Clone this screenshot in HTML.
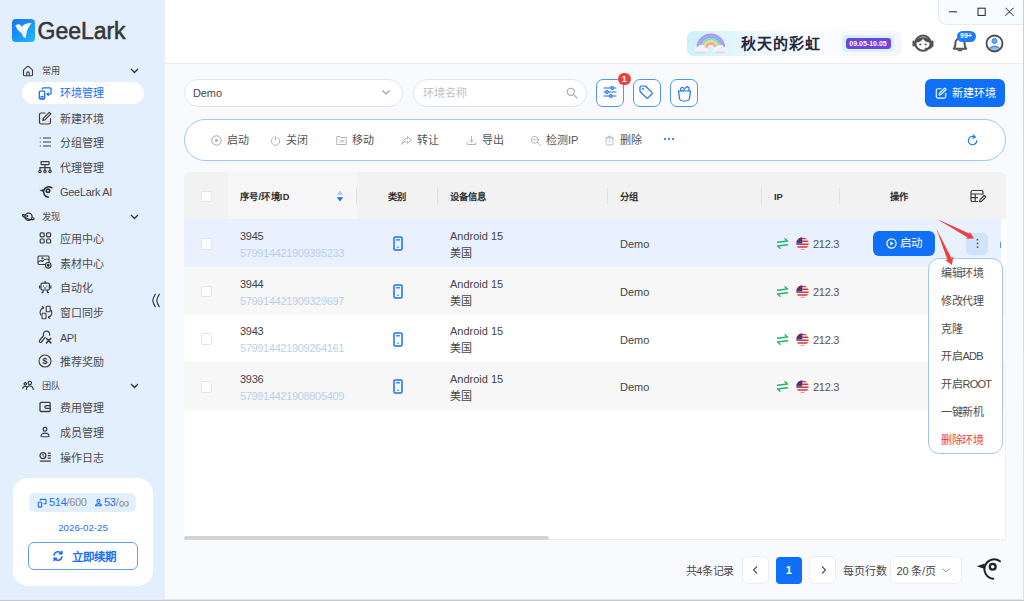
<!DOCTYPE html>
<html lang="zh-CN">
<head>
<meta charset="utf-8">
<title>GeeLark</title>
<style>
*{box-sizing:border-box;margin:0;padding:0}
html,body{width:1024px;height:601px;overflow:hidden}
body{font-family:"Liberation Sans",sans-serif;font-size:11px;color:#333;background:#f8fafe;position:relative}
.abs{position:absolute}
svg{display:block;overflow:visible}
/* sidebar */
#side{position:absolute;left:0;top:0;width:165px;height:599px;background:#e4effd}
#logo-ic{position:absolute;left:12px;top:18.5px;width:23px;height:23px;border-radius:4px;background:linear-gradient(135deg,#1478f8 10%,#22b6fc 95%)}
#logo-tx{position:absolute;left:37.6px;top:15.7px;font-size:23px;font-weight:normal;letter-spacing:-.05px;color:#363638;line-height:30px;-webkit-text-stroke:.55px #363638}
.grp{position:absolute;left:0;width:165px;height:16px;font-size:9.2px;color:#4a4a4a;line-height:16px}
.grp span{position:absolute;left:42px;top:0}
.grp svg.gi{position:absolute;left:22px;top:2px}
.grp svg.ch{position:absolute;left:130px;top:5px}
.it{position:absolute;left:22px;width:122px;height:22px;line-height:22px;font-size:11px;color:#4a4a4a;border-radius:11px}
.it span{position:absolute;left:38px;top:0;white-space:nowrap}
.it svg{position:absolute;left:15.5px;top:2.9px}
.it.on svg{top:4px}
.it.on{background:#fff;color:#1a6ff5}
#card{position:absolute;left:13px;top:478px;width:140px;height:108px;background:#fff;border-radius:15px}
#stat{position:absolute;left:16px;top:15px;width:107px;height:19px;border-radius:6px;background:#e4effd;font-size:11px;line-height:19px;color:#1a6ff5;white-space:nowrap}
#stat i{font-style:normal;color:#8a8f99}
#date{position:absolute;left:0;top:43px;width:140px;text-align:center;font-size:9.7px;color:#1a6ff5;line-height:14px}
#renew{position:absolute;left:15px;top:64px;width:110px;height:28px;border:1px solid #5a9df8;border-radius:6px;color:#1a6ff5;font-weight:bold;font-size:11.5px;line-height:26px}
#renew span{position:absolute;left:42.5px;top:1.2px;white-space:nowrap}
/* header */
#head{position:absolute;left:165px;top:0;width:859px;height:64px;background:#fff;border-bottom:1px solid #ececee}
#winc{position:absolute;left:938px;top:0;width:86px;height:25px;background:#f8fbff;border-left:1px solid #e6ebf3;border-bottom:1px solid #e6ebf3;border-bottom-left-radius:9px}
#banner{position:absolute;left:687px;top:31px;width:215px;height:25px;border-radius:7px;background:linear-gradient(90deg,#cdeffc 0%,#e6f7fe 25%,#fafdff 50%,#f8f9fe 80%,#f5f6fe 100%)}
#btx{position:absolute;left:740.5px;top:32px;font-size:15px;font-weight:bold;letter-spacing:1.2px;color:#26263a;line-height:23px;white-space:nowrap}
#dwrap{position:absolute;left:842px;top:35px;width:52px;height:17px;border-radius:4px;background:#d6f4fd}
#dpill{position:absolute;left:845.5px;top:38px;width:45px;height:11px;border-radius:3px;background:#6f45e0;color:#fff;font-size:7px;font-weight:bold;line-height:11px;text-align:center;white-space:nowrap}
#b99{position:absolute;left:956.5px;top:31px;width:19px;height:10.5px;border-radius:6px;background:#1f7cf6;color:#fff;font-size:7px;line-height:10.5px;text-align:center;font-weight:bold}
/* toolbar */
.pill{position:absolute;height:27.6px;border:1px solid #e3e6ec;border-radius:14px;background:#fff;font-size:11px;line-height:27px}
.ib{position:absolute;top:79px;width:28.3px;height:27.8px;border:1px solid #4d95f7;border-radius:7px;background:#fff}
#newb{position:absolute;left:925px;top:79px;width:80px;height:28px;border-radius:6px;background:#0f6ff6;color:#fff;font-size:11px;line-height:28px}
#acts{position:absolute;left:184px;top:119px;width:822px;height:41.5px;border:1px solid #a3c8f8;border-radius:21px;background:#fff}
.ac{position:absolute;top:.8px;height:39px;line-height:39px;font-size:11px;color:#555;white-space:nowrap}
.ac svg{position:absolute;top:14px;left:-16px}
/* table */
#tbl{position:absolute;left:184px;top:172px;width:822px;height:368px;background:#fff;border-radius:6px 6px 0 0;overflow:hidden}
#th{position:absolute;left:0;top:0;width:822px;height:47px;background:#f2f2f3}
#th .sorted{position:absolute;left:44px;top:0;width:129px;height:47px;background:#f6f6f7}
.h{position:absolute;top:.6px;height:47px;line-height:48px;font-size:9.3px;font-weight:bold;color:#303030;white-space:nowrap}
.sep{position:absolute;top:16px;width:1px;height:16px;background:#dfe1e5}
.row{position:absolute;left:0;width:822px;height:47.8px}
.cb{position:absolute;left:16.7px;margin-top:.8px;width:11.5px;height:11.5px;border:1px solid #e4e6ea;border-radius:2px;background:#fff}
.no{position:absolute;left:56px;top:9.6px;font-size:11px;line-height:14px;color:#454545;letter-spacing:-.3px}
.id{position:absolute;left:56px;top:26.8px;font-size:11px;line-height:14px;color:#bccfe8;letter-spacing:-.34px}
.ph{position:absolute;left:209px;top:17px}
.dv{position:absolute;left:266px;top:9.6px;font-size:11px;line-height:14px;color:#454545}
.cn{position:absolute;left:266px;top:26.6px;font-size:11px;line-height:15px;color:#454545}
.gp{position:absolute;left:436px;top:18px;font-size:11px;line-height:14px;color:#454545}
.ex{position:absolute;left:592px;top:19px}
.fl{position:absolute;left:612px;top:18px}
.ip{position:absolute;left:629px;top:18px;font-size:11px;line-height:14px;color:#555;letter-spacing:-.3px}
/* menu */
#menu{position:absolute;left:928px;top:258px;width:75px;height:196px;border:1px solid #a3c8f8;border-radius:11px;background:#fff}
#menu div{position:absolute;left:12px;font-size:11px;line-height:16px;color:#4c4c4c;white-space:nowrap;letter-spacing:-.3px}
/* pager */
.pb{position:absolute;top:556px;width:27px;height:28px;border:1px solid #eceef3;border-radius:6px;background:#fff}
</style>
</head>
<body>
<div id="side">
  <div id="logo-ic"><svg width="23" height="23" viewBox="0 0 23 23"><path d="M3.100 6.300L6.600 5.200C8 5 9 6.500 9.800 8.200 11 5.500 14 4.200 19.800 4 17.500 6 16.500 9 14.800 12.100L13.600 19.200 11 17.600C10.500 15 9.500 13.800 7.900 12.800 6 11.500 4.800 9.800 4.200 7.800z" fill="#fff"/><path d="M9.800 8.200L14.800 12.100 13.600 19.200 11 17.600C10.500 15 9.500 13.800 7.900 12.800z" fill="#dff0ff" opacity=".7"/></svg></div>
  <div id="logo-tx">GeeLark</div>

  <div class="grp" style="top:63px"><svg class="gi" width="12" height="12" viewBox="0 0 12 12" fill="none" stroke="#3a3a3a" stroke-width="1.100" stroke-linejoin="round"><path d="M1.500 5.600Q1.500 4.800 2.100 4.300L5.200 1.700Q6 1.100 6.800 1.700L9.900 4.300Q10.500 4.800 10.500 5.600V9.800a1 1 0 0 1-1 1h-7a1 1 0 0 1-1-1z"/><path d="M4.700 10.800V8.200a1.300 1.300 0 0 1 2.600 0v2.600"/></svg><span>常用</span><svg class="ch" width="9" height="6" viewBox="0 0 9 6" fill="none" stroke="#333" stroke-width="1.300"><path d="M1 1l3.500 3.500L8 1"/></svg></div>
  <div class="it on" style="top:82px"><svg width="14" height="14" viewBox="0 0 14 14" fill="none" stroke="#1a6ff5" stroke-width="1.300" stroke-linejoin="round" stroke-linecap="round"><rect x="1.300" y="5.200" width="5.400" height="7.800" rx=".9"/><path d="M3 12.800v-2.300h2v2.300" stroke-width="1.100"/><path d="M4.300 3V2.800a1 1 0 0 1 1-1h6.700a1 1 0 0 1 1 1v4.400a1 1 0 0 1-1 1H9.200"/><path d="M10.400 6.900L9 8.200l1.400 1.300" stroke-width="1.100"/></svg><span>环境管理</span></div>
  <div class="it" style="top:107.7px"><svg width="14" height="14" viewBox="0 0 14 14" fill="none" stroke="#3a3a3a" stroke-width="1.200" stroke-linejoin="round" stroke-linecap="round"><path d="M7 2H3.300A1.800 1.800 0 0 0 1.500 3.800v7.400A1.800 1.800 0 0 0 3.300 13h7.400a1.800 1.800 0 0 0 1.800-1.800V7.500"/><path d="M11.300 1.300l1.600 1.600-6 6-2.100.5.500-2.100z"/></svg><span>新建环境</span></div>
  <div class="it" style="top:131.7px"><svg width="14" height="14" viewBox="0 0 14 14" fill="none" stroke="#3a3a3a" stroke-width="1.200"><path d="M5 3h8M5 7h8M5 11h8"/><path d="M1.800 3h1M1.800 7h1M1.800 11h1" stroke-width="1.100"/></svg><span>分组管理</span></div>
  <div class="it" style="top:156.7px"><svg width="14" height="14" viewBox="0 0 14 14" fill="none" stroke="#3a3a3a" stroke-width="1.200"><rect x="3" y="1.600" width="8" height="3" rx=".6"/><path d="M7 4.600v3M2 10.200V7.600h10v2.600M7 7.600v2.600"/><circle cx="2" cy="11.500" r="1.200"/><circle cx="7" cy="11.500" r="1.200"/><circle cx="12" cy="11.500" r="1.200"/></svg><span>代理管理</span></div>
  <div class="it" style="top:181px"><svg style="left:17px;top:5.400px" width="14" height="11.900" viewBox="0 0 26 22" fill="none" stroke="#2e2e2e" stroke-linecap="round"><path d="M.6 8.300L8.800 5.600Q8 8.300 8.800 11z" fill="#2e2e2e" stroke="none"/><path d="M24 3.300A9.700 9.700 0 1 0 17.300 20.700" stroke-width="2.800"/><circle cx="16.700" cy="8.700" r="3.200" stroke-width="3" /></svg><span style="letter-spacing:-.3px">GeeLark AI</span></div>
  <div class="grp" style="top:209px"><svg class="gi" width="13" height="12" viewBox="0 0 13 12" fill="none" stroke="#2b2b2b" stroke-width="1.200"><circle cx="6.500" cy="5.800" r="3.600"/><path d="M3.200 4.300C1.600 3.600.6 3.500.5 4c-.2.900 2.200 2.600 5.400 3.700s6 1.300 6.300.4c.1-.4-.5-1.100-1.600-1.900"/><circle cx="5.300" cy="5" r=".5" fill="#2b2b2b"/></svg><span>发现</span><svg class="ch" width="9" height="6" viewBox="0 0 9 6" fill="none" stroke="#333" stroke-width="1.300"><path d="M1 1l3.500 3.500L8 1"/></svg></div>
  <div class="it" style="top:227.7px"><svg width="14" height="14" viewBox="0 0 14 14" fill="none" stroke="#3a3a3a" stroke-width="1.200"><rect x="2.200" y="1.800" width="4" height="4" rx="1"/><rect x="8.600" y="1.800" width="4" height="4" rx="1"/><rect x="2.200" y="8" width="4" height="4" rx="1"/><rect x="8.600" y="8" width="4" height="4" rx="1"/></svg><span>应用中心</span></div>
  <div class="it" style="top:252.7px"><svg style="top:1px;left:14.500px" width="15" height="15" viewBox="0 0 15 15" fill="none" stroke="#3a3a3a" stroke-width="1.100" stroke-linejoin="round"><path d="M8 10.500H2a1 1 0 0 1-1-1V3a1 1 0 0 1 1-1h9a1 1 0 0 1 1 1v5"/><path d="M1 8.500c1.500-2 3-2.500 4.500-1 1.200-1.800 3.500-3.300 6.500-1.800"/><circle cx="5.500" cy="4.300" r=".6" fill="#3a3a3a"/><circle cx="11.200" cy="11.300" r="2.800"/><circle cx="11.200" cy="11.300" r=".9" fill="#3a3a3a"/></svg><span>素材中心</span></div>
  <div class="it" style="top:276.7px"><svg width="14" height="14" viewBox="0 0 14 14" fill="none" stroke="#3a3a3a" stroke-width="1.200" stroke-linejoin="round"><rect x="3" y="3.200" width="8.400" height="6.800" rx="1.200"/><path d="M7.200 3.200V1M1.600 5.500v3M12.800 5.500v3M5 10v2.600H3.500M9.400 10v2.600h1.500"/><path d="M5.500 5.600v1M8.900 5.600v1M6 8h2.400" stroke-width="1"/></svg><span>自动化</span></div>
  <div class="it" style="top:301.7px"><svg width="16" height="15" viewBox="0 0 16 15" fill="none" stroke="#3a3a3a" stroke-width="1.100" stroke-linejoin="round" stroke-linecap="round"><rect x="8.200" y="1.200" width="4" height="5.600" rx=".7"/><rect x="4" y="8.200" width="4" height="5.600" rx=".7"/><path d="M5.500 2.500C2.800 3.500 1 6.800 2.800 10M10.500 12.500c2.700-1 4.500-4.300 2.700-7.500"/><path d="M4.200 1.600l1.500.9-1 1.400M11.800 13.400l-1.500-.9 1-1.400"/></svg><span>窗口同步</span></div>
  <div class="it" style="top:326.7px"><svg width="15" height="14" viewBox="0 0 15 14" fill="none" stroke="#3a3a3a" stroke-width="1.200" stroke-linecap="round" stroke-linejoin="round"><path d="M11.600 5.200A3.200 3.200 0 1 0 5.600 5.500L1.600 10.400a1.200 1.200 0 0 0 1.800 1.600l3.800-4.600"/><path d="M8.500 8.500l4.400 4.400M12.900 8.500l-4.400 4.400" stroke-width="1.500"/></svg><span style="letter-spacing:-.5px">API</span></div>
  <div class="it" style="top:350.7px"><svg width="14" height="14" viewBox="0 0 14 14" fill="none" stroke="#3a3a3a" stroke-width="1.100"><circle cx="7" cy="7" r="6"/><text x="7" y="10.400" font-family="Liberation Sans, sans-serif" font-size="9.500" font-weight="bold" text-anchor="middle" fill="#3a3a3a" stroke="none">$</text></svg><span>推荐奖励</span></div>
  <div class="grp" style="top:378.2px"><svg class="gi" width="13" height="11" viewBox="0 0 13 11" fill="none" stroke="#2b2b2b" stroke-width="1.100" stroke-linecap="round"><circle cx="7.800" cy="3" r="1.700"/><path d="M4.300 9.500c.3-2.300 1.700-3.500 3.500-3.500s3.200 1.200 3.500 3.500"/><circle cx="3.300" cy="3.800" r="1.200"/><path d="M.8 8.500C1 7 2 6.200 3.300 6.200c.6 0 1.100.2 1.500.5"/></svg><span>团队</span><svg class="ch" width="9" height="6" viewBox="0 0 9 6" fill="none" stroke="#333" stroke-width="1.300"><path d="M1 1l3.500 3.500L8 1"/></svg></div>
  <div class="it" style="top:396.7px"><svg width="14" height="14" viewBox="0 0 14 14" fill="none" stroke="#3a3a3a" stroke-width="1.300" stroke-linejoin="round"><rect x="2" y="2.300" width="10.200" height="9.200" rx="1"/><path d="M12.200 5.600H8.300a1.400 1.400 0 0 0 0 2.800h3.900"/></svg><span>费用管理</span></div>
  <div class="it" style="top:421.7px"><svg width="14" height="14" viewBox="0 0 14 14" fill="none" stroke="#3a3a3a" stroke-width="1.200"><circle cx="7" cy="4.300" r="1.900"/><path d="M3 11.200c0-1.800 1.800-3 4-3s4 1.200 4 3c0 .5-8 .5-8 0z" stroke-linejoin="round"/></svg><span>成员管理</span></div>
  <div class="it" style="top:446.7px"><svg width="14" height="14" viewBox="0 0 14 14" fill="none" stroke="#3a3a3a" stroke-width="1.200"><circle cx="5" cy="5.600" r="3"/><path d="M5 3.800v1.900l1.500 1" stroke-width="1"/><path d="M9.800 3.200h3M9.800 5.700h3M9.800 8.200h3M1.800 11.200h11"/></svg><span>操作日志</span></div>
  <svg class="abs" style="left:151px;top:293px" width="10" height="15" viewBox="0 0 10 15" fill="none" stroke="#333" stroke-width="1.200" stroke-linecap="round" stroke-linejoin="round"><path d="M4.300 1.200Q2.200 4.500 1.700 7.500 2.200 10.500 4.300 13.800M8.300 1.200Q6.200 4.500 5.700 7.500 6.200 10.500 8.300 13.800"/></svg>
  <div id="card">
    <div id="stat"><svg class="abs" style="left:8px;top:5px" width="10" height="10" viewBox="0 0 14 14" fill="none" stroke="#1a6ff5" stroke-width="1.600" stroke-linejoin="round"><rect x="1.800" y="6" width="4.700" height="6.800" rx=".8"/><path d="M4.500 3.800V3a1 1 0 0 1 1-1h6.200a1 1 0 0 1 1 1v4a1 1 0 0 1-1 1H9"/></svg><span class="abs" style="left:20px;top:0;letter-spacing:-.3px">514<i>/600</i></span><svg class="abs" style="left:65px;top:5px" width="9" height="9" viewBox="0 0 14 14" fill="none" stroke="#1a6ff5" stroke-width="1.800"><circle cx="7" cy="4.300" r="2.300"/><path d="M2.500 12c0-2 2-3.300 4.500-3.300s4.500 1.300 4.500 3.300z" stroke-linejoin="round"/></svg><span class="abs" style="left:75px;top:0;letter-spacing:-.3px">53<i>/<b style="font-weight:normal;font-size:15px;line-height:0;position:relative;top:1.5px">∞</b></i></span></div>
    <div id="date">2026-02-25</div>
    <div id="renew"><svg class="abs" style="left:23px;top:7px" width="12" height="12" viewBox="0 0 12 12" fill="none" stroke="#1a6ff5" stroke-width="1.600" stroke-linecap="round"><path d="M2 5a4.200 4.200 0 0 1 7.500-1.500M10 7a4.200 4.200 0 0 1-7.500 1.500"/><path d="M9.800 1.500v2.300H7.500M2.200 10.500V8.200h2.300" stroke-linejoin="round"/></svg><span>立即续期</span></div>
  </div>
</div>
<div id="head"></div>

<div id="banner"></div>
<svg class="abs" style="left:692px;top:31px" width="38" height="24" viewBox="0 0 38 24" fill="none">
  <path d="M5.500 17a13.300 13.300 0 0 1 26.600 0" stroke="#b497ee" stroke-width="2.300"/>
  <path d="M7.700 17a11.100 11.100 0 0 1 22.200 0" stroke="#85b2f4" stroke-width="2.300"/>
  <path d="M9.900 17a8.900 8.900 0 0 1 17.800 0" stroke="#86dcc3" stroke-width="2.300"/>
  <path d="M12.100 17a6.700 6.700 0 0 1 13.400 0" stroke="#f4dc84" stroke-width="2.300"/>
  <path d="M14.300 17a4.500 4.500 0 0 1 9 0" stroke="#f5a09a" stroke-width="2.300"/>
  <g fill="#f3f3f7"><ellipse cx="8.500" cy="19" rx="6.500" ry="3.300"/><circle cx="5" cy="18.500" r="3"/><circle cx="9.500" cy="17" r="3.300"/><circle cx="13" cy="18.800" r="2.600"/><ellipse cx="28" cy="19" rx="6.500" ry="3.300"/><circle cx="24.500" cy="18.200" r="2.800"/><circle cx="28.500" cy="17" r="3.300"/><circle cx="32.500" cy="18.800" r="2.800"/></g>
  <g fill="#cfcfdc" opacity=".55"><ellipse cx="8.500" cy="21.300" rx="5.500" ry="1.100"/><ellipse cx="28" cy="21.300" rx="5.500" ry="1.100"/></g>
</svg>
<div id="btx">秋天的彩虹</div>
<div id="dwrap"></div>
<div id="dpill">09.05-10.05</div>
<svg class="abs" style="left:911.500px;top:33px" width="22" height="20" viewBox="0 0 22 20" fill="none" stroke="#505052" stroke-width="2" stroke-linecap="round">
  <circle cx="11" cy="10.200" r="7.600"/>
  <path d="M3.600 9.500C4.500 2.500 17.500 2.500 18.400 9.500 15.500 9.800 12.500 8.500 11 5.800 9.500 8.500 6.500 9.800 3.600 9.500z" fill="#505052" stroke="none"/>
  <path d="M1.700 8.800v3.600M20.300 8.800v3.600" stroke-width="2.400"/>
  <path d="M20 13c-.5 1.800-3 2.600-6.500 2.600" stroke-width="1.600"/>
  <circle cx="8.200" cy="11.600" r="1" fill="#505052" stroke="none"/><circle cx="13.700" cy="11.600" r="1" fill="#505052" stroke="none"/>
</svg>
<svg class="abs" style="left:950.500px;top:34.500px" width="18" height="19" viewBox="0 0 18 19" fill="none" stroke="#555557" stroke-width="2" stroke-linecap="round" stroke-linejoin="round">
  <path d="M2.800 13.800c1.300-1.200 1.600-2.700 1.600-5.800a4.600 4.600 0 0 1 9.200 0c0 3.100.3 4.600 1.600 5.800z"/>
  <path d="M7 14.200a2.100 2.100 0 0 0 4 0" stroke-width="1.800"/>
</svg>
<div id="b99">99+</div>
<svg class="abs" style="left:985.200px;top:33.800px" width="19" height="19" viewBox="0 0 19 19" fill="none">
  <clipPath id="uc"><circle cx="9.500" cy="9.500" r="7.600"/></clipPath>
  <g clip-path="url(#uc)"><circle cx="9.500" cy="7" r="2.500" fill="#6aa8f9" stroke="#2f80f5" stroke-width="1"/><ellipse cx="9.500" cy="16.800" rx="6" ry="4.500" fill="#8dbdfb" stroke="#3a88f6" stroke-width="1.200"/></g>
  <circle cx="9.500" cy="9.500" r="8" stroke="#4a4a4c" stroke-width="1.800"/>
</svg>
<div id="winc">
  <svg class="abs" style="left:10px;top:7px" width="70" height="10" viewBox="0 0 70 10" fill="none" stroke="#222" stroke-width="1"><path d="M0 4.800h8"/><rect x="29" y="1.200" width="7.200" height="7.200"/><path d="M56.500 .8l8 8M64.500 .8l-8 8"/></svg>
</div>

<div class="pill" style="left:184px;top:79px;width:219px"><span class="abs" style="left:8px;top:0;color:#484848;letter-spacing:-.1px">Demo</span><svg class="abs" style="left:197px;top:10px" width="8" height="5" viewBox="0 0 8 5" fill="none" stroke="#9a9ea6" stroke-width="1.100"><path d="M.5.500l3.500 3.500L7.500.500"/></svg></div>
<div class="pill" style="left:413px;top:79px;width:174px"><span class="abs" style="left:8.500px;top:0;color:#bcc0c7">环境名称</span><svg class="abs" style="left:151.500px;top:7px" width="12" height="12" viewBox="0 0 12 12" fill="none" stroke="#a5a9b0" stroke-width="1.100" stroke-linecap="round"><circle cx="4.800" cy="4.800" r="3.600"/><path d="M7.600 7.600l3.400 3.400"/></svg></div>
<div class="ib" style="left:596px"><svg class="abs" style="left:6.300px;top:5.200px" width="14" height="14" viewBox="0 0 14 14" fill="none" stroke="#1a6ff5" stroke-width="1.200" stroke-linecap="round"><path d="M1 3h12M1 7h12M1 11h12"/><circle cx="9.200" cy="3" r="1.300" fill="#fff"/><circle cx="4" cy="7" r="1.300" fill="#fff"/><circle cx="7.800" cy="11" r="1.300" fill="#fff"/></svg></div>
<div class="abs" style="left:618px;top:72.500px;width:12.500px;height:12.500px;border-radius:7px;background:#f03e3e;color:#fff;font-size:9px;font-weight:bold;line-height:12.500px;text-align:center">1</div>
<div class="ib" style="left:633px"><svg class="abs" style="left:4.300px;top:4.300px" width="16" height="16" viewBox="0 0 16 16" fill="none" stroke="#1a6ff5" stroke-width="1.200" stroke-linejoin="round"><path d="M2 3.200A1.200 1.200 0 0 1 3.200 2h4.300l6.300 6.300a1.200 1.200 0 0 1 0 1.700l-3.800 3.800a1.200 1.200 0 0 1-1.700 0L2 7.500z"/><circle cx="5" cy="5" r=".9" fill="#1a6ff5" stroke="none"/></svg></div>
<div class="ib" style="left:670.200px"><svg class="abs" style="left:6px;top:4.500px" width="15" height="17" viewBox="0 0 15 17" fill="none" stroke="#1a6ff5" stroke-width="1.200" stroke-linejoin="round"><circle cx="5.300" cy="4.300" r="1.800"/><path d="M8 3.700l2-2.300 2.200 1.600-.6 2.800"/><path d="M1.500 6h12l-1 7.500Q12 16 7.500 16 3 16 2.500 13.500z" fill="#fff"/></svg></div>
<div id="newb"><svg class="abs" style="left:10px;top:8px" width="12" height="12" viewBox="0 0 14 14" fill="none" stroke="#fff" stroke-width="1.300" stroke-linejoin="round" stroke-linecap="round"><path d="M7 2H3.300A1.800 1.800 0 0 0 1.500 3.800v7.400A1.800 1.800 0 0 0 3.300 13h7.400a1.800 1.800 0 0 0 1.800-1.800V7.500"/><path d="M11.300 1.300l1.600 1.600-6 6-2.100.5.500-2.100z"/></svg><span class="abs" style="left:27px;top:0;white-space:nowrap">新建环境</span></div>
<div id="acts">
  <div class="ac" style="left:42px"><svg width="11" height="11" viewBox="0 0 11 11" fill="none" stroke="#a0a4ab" stroke-width="1"><circle cx="5.500" cy="5.500" r="4.700"/><path d="M4.300 3.500v4l3.300-2z" fill="#a0a4ab" stroke="none"/></svg>启动</div>
  <div class="ac" style="left:101px"><svg width="11" height="11" viewBox="0 0 11 11" fill="none" stroke="#b0b4bb" stroke-width="1" stroke-linecap="round"><path d="M3.300 2.500a4.200 4.200 0 1 0 4.400 0M5.500 1v4"/></svg>关闭</div>
  <div class="ac" style="left:167px"><svg width="11" height="11" viewBox="0 0 11 11" fill="none" stroke="#b0b4bb" stroke-width="1"><path d="M.8 1.500h3.200l1 1h5.200v7H.8z" stroke-linejoin="round"/><path d="M3.500 6h3.800M6 4.500L7.500 6 6 7.500"/></svg>移动</div>
  <div class="ac" style="left:232px"><svg width="11" height="11" viewBox="0 0 11 11" fill="none" stroke="#b0b4bb" stroke-width="1" stroke-linejoin="round"><path d="M6.500 1.500L10.300 5 6.500 8.500v-2C3.500 6.500 1.800 7.500.8 9.500c.3-3.500 2.200-5.700 5.700-6z"/></svg>转让</div>
  <div class="ac" style="left:297px"><svg width="11" height="11" viewBox="0 0 11 11" fill="none" stroke="#b0b4bb" stroke-width="1" stroke-linecap="round"><path d="M5.500 1.500v5.500M3.200 4.800l2.300 2.300 2.300-2.300M1.200 7.500v2h8.600v-2"/></svg>导出</div>
  <div class="ac" style="left:361px"><svg width="11" height="11" viewBox="0 0 11 11" fill="none" stroke="#b0b4bb" stroke-width="1" stroke-linecap="round"><circle cx="4.800" cy="4.800" r="3.500"/><path d="M7.500 7.500l2.800 2.800M2.800 5.300l1.300-1.300 1.200 1.200 1.500-1.500"/></svg>检测IP</div>
  <div class="ac" style="left:434.500px"><svg width="11" height="11" viewBox="0 0 11 11" fill="none" stroke="#c0c4ca" stroke-width="1" stroke-linejoin="round"><path d="M2.200 2.800h6.600v7H2.200zM4 2.800V1.300h3v1.500M1 2.800h9"/><path d="M5.500 5v2.300" /></svg>删除</div>
  <svg class="abs" style="left:478px;top:17px" width="12" height="4" viewBox="0 0 12 4"><circle cx="2" cy="2" r="1.100" fill="#1a6ff5"/><circle cx="6" cy="2" r="1.100" fill="#1a6ff5"/><circle cx="10" cy="2" r="1.100" fill="#1a6ff5"/></svg>
  <svg class="abs" style="left:782px;top:14px" width="11" height="12" viewBox="0 0 11 12" fill="none" stroke="#1a6ff5" stroke-width="1.100" stroke-linecap="round"><path d="M9.700 6.500a4.200 4.200 0 1 1-1.800-3.400"/><path d="M6.300.8l2 2.200-2.300 1.500" stroke-linejoin="round"/></svg>
</div>
<div id="tbl">
<div id="th"><div class="sorted"></div>
<div class="cb" style="top:18px"></div>
<div class="h" style="left:56px;letter-spacing:.25px">序号/环境ID</div>
<svg class="abs" style="left:152px;top:17px" width="8" height="14" viewBox="0 0 8 14"><path d="M4 1.500L7.200 5.700H.8z" fill="#a9c9f8"/><path d="M4 12.500L7.200 8.300H.8z" fill="#1a6ff5"/></svg>
<div class="sep" style="left:172px"></div><div class="h" style="left:204px">类别</div><div class="sep" style="left:253px"></div><div class="h" style="left:266px">设备信息</div><div class="sep" style="left:423px"></div><div class="h" style="left:436px">分组</div><div class="sep" style="left:577px"></div><div class="h" style="left:590px">IP</div><div class="sep" style="left:655px"></div><div class="h" style="left:706px">操作</div>
<svg class="abs" style="left:786px;top:17px" width="17" height="14" viewBox="0 0 17 14" fill="none" stroke="#3a3a3a" stroke-width="1.200" stroke-linejoin="round"><path d="M8 12.500H2.500a1.500 1.500 0 0 1-1.500-1.500V3a1.500 1.500 0 0 1 1.500-1.500h9A1.500 1.500 0 0 1 13 3v2.500"/><path d="M1 5h12M1 8.700h7M5.200 5v7.500"/><path d="M14.300 6.500l1.500 1.500-4.300 4.300-1.900.4.400-1.900z"/></svg>
</div>
<div class="row" style="top:47.3px;background:#e8f1fd;width:817px"><div class="cb" style="top:18px"></div><div class="no">3945</div><div class="id">579914421909395233</div><svg class="ph" width="10" height="15" viewBox="0 0 10 15" fill="none" stroke="#1a6ff5" stroke-width="1.500"><rect x="1" y="1" width="8" height="13" rx="1.300"/><path d="M3 3.800h4" stroke-width="1.200"/><circle cx="5" cy="11.300" r=".8" fill="#1a6ff5" stroke="none"/></svg><div class="dv">Android 15</div><div class="cn">美国</div><div class="gp">Demo</div><svg class="ex" width="13" height="11" viewBox="0 0 13 11" fill="none" stroke="#23b56a" stroke-width="1.400" stroke-linecap="round" stroke-linejoin="round"><path d="M1.500 4.200l10-1.200M9 .8L11.500 3M11.500 6.800l-10 1.200M4 10.200L1.500 8"/></svg><svg class="fl" width="13" height="13" viewBox="0 0 13 13"><clipPath id="fc0"><circle cx="6.500" cy="6.500" r="6.200"/></clipPath><g clip-path="url(#fc0)"><rect width="13" height="13" fill="#f4f4f4"/><path d="M0 1.400h13M0 4.300h13M0 7.200h13M0 10.100h13M0 13h13" stroke="#d9363e" stroke-width="1.500"/><rect width="6.200" height="6.500" fill="#3c3b8e"/></g></svg><div class="ip">212.3</div><div class="abs" style="left:689px;top:12px;width:62px;height:25px;border-radius:6px;background:#0f6ff6;color:#fff;font-size:11.500px;line-height:25px"><svg class="abs" style="left:13px;top:7px" width="11" height="11" viewBox="0 0 11 11" fill="none" stroke="#fff" stroke-width="1.200"><circle cx="5.500" cy="5.500" r="4.600"/><path d="M4.300 3.400v4.200l3.400-2.100z" fill="#fff" stroke="none"/></svg><span class="abs" style="left:27px;top:0;white-space:nowrap">启动</span></div><div class="abs" style="left:782px;top:14px;width:21.500px;height:21.500px;border-radius:5px;background:#cfe3fd"><svg class="abs" style="left:9.500px;top:5px" width="3" height="11" viewBox="0 0 3 11"><circle cx="1.500" cy="1.700" r=".9" fill="#555"/><circle cx="1.500" cy="5.400" r=".9" fill="#555"/><circle cx="1.500" cy="9.100" r=".9" fill="#555"/></svg></div><div class="abs" style="left:816px;top:23px;width:1px;height:6px;background:#3f7fe0;opacity:.85"></div></div>
<div class="row" style="top:95px;background:#f7f7f8;width:822px"><div class="cb" style="top:18px"></div><div class="no">3944</div><div class="id">579914421909329697</div><svg class="ph" width="10" height="15" viewBox="0 0 10 15" fill="none" stroke="#1a6ff5" stroke-width="1.500"><rect x="1" y="1" width="8" height="13" rx="1.300"/><path d="M3 3.800h4" stroke-width="1.200"/><circle cx="5" cy="11.300" r=".8" fill="#1a6ff5" stroke="none"/></svg><div class="dv">Android 15</div><div class="cn">美国</div><div class="gp">Demo</div><svg class="ex" width="13" height="11" viewBox="0 0 13 11" fill="none" stroke="#23b56a" stroke-width="1.400" stroke-linecap="round" stroke-linejoin="round"><path d="M1.500 4.200l10-1.200M9 .8L11.500 3M11.500 6.800l-10 1.200M4 10.200L1.500 8"/></svg><svg class="fl" width="13" height="13" viewBox="0 0 13 13"><clipPath id="fc1"><circle cx="6.500" cy="6.500" r="6.200"/></clipPath><g clip-path="url(#fc1)"><rect width="13" height="13" fill="#f4f4f4"/><path d="M0 1.400h13M0 4.300h13M0 7.200h13M0 10.100h13M0 13h13" stroke="#d9363e" stroke-width="1.500"/><rect width="6.200" height="6.500" fill="#3c3b8e"/></g></svg><div class="ip">212.3</div></div>
<div class="row" style="top:142.7px;background:#ffffff;width:822px"><div class="cb" style="top:18px"></div><div class="no">3943</div><div class="id">579914421909264161</div><svg class="ph" width="10" height="15" viewBox="0 0 10 15" fill="none" stroke="#1a6ff5" stroke-width="1.500"><rect x="1" y="1" width="8" height="13" rx="1.300"/><path d="M3 3.800h4" stroke-width="1.200"/><circle cx="5" cy="11.300" r=".8" fill="#1a6ff5" stroke="none"/></svg><div class="dv">Android 15</div><div class="cn">美国</div><div class="gp">Demo</div><svg class="ex" width="13" height="11" viewBox="0 0 13 11" fill="none" stroke="#23b56a" stroke-width="1.400" stroke-linecap="round" stroke-linejoin="round"><path d="M1.500 4.200l10-1.200M9 .8L11.500 3M11.500 6.800l-10 1.200M4 10.200L1.500 8"/></svg><svg class="fl" width="13" height="13" viewBox="0 0 13 13"><clipPath id="fc2"><circle cx="6.500" cy="6.500" r="6.200"/></clipPath><g clip-path="url(#fc2)"><rect width="13" height="13" fill="#f4f4f4"/><path d="M0 1.400h13M0 4.300h13M0 7.200h13M0 10.100h13M0 13h13" stroke="#d9363e" stroke-width="1.500"/><rect width="6.200" height="6.500" fill="#3c3b8e"/></g></svg><div class="ip">212.3</div></div>
<div class="row" style="top:190.4px;background:#f7f7f8;width:822px"><div class="cb" style="top:18px"></div><div class="no">3936</div><div class="id">579914421908805409</div><svg class="ph" width="10" height="15" viewBox="0 0 10 15" fill="none" stroke="#1a6ff5" stroke-width="1.500"><rect x="1" y="1" width="8" height="13" rx="1.300"/><path d="M3 3.800h4" stroke-width="1.200"/><circle cx="5" cy="11.300" r=".8" fill="#1a6ff5" stroke="none"/></svg><div class="dv">Android 15</div><div class="cn">美国</div><div class="gp">Demo</div><svg class="ex" width="13" height="11" viewBox="0 0 13 11" fill="none" stroke="#23b56a" stroke-width="1.400" stroke-linecap="round" stroke-linejoin="round"><path d="M1.500 4.200l10-1.200M9 .8L11.500 3M11.500 6.800l-10 1.200M4 10.200L1.500 8"/></svg><svg class="fl" width="13" height="13" viewBox="0 0 13 13"><clipPath id="fc3"><circle cx="6.500" cy="6.500" r="6.200"/></clipPath><g clip-path="url(#fc3)"><rect width="13" height="13" fill="#f4f4f4"/><path d="M0 1.400h13M0 4.300h13M0 7.200h13M0 10.100h13M0 13h13" stroke="#d9363e" stroke-width="1.500"/><rect width="6.200" height="6.500" fill="#3c3b8e"/></g></svg><div class="ip">212.3</div></div>
<div class="abs" style="left:821px;top:239px;width:1px;height:129px;background:#eeeeef"></div><div class="abs" style="left:0;top:367px;width:822px;height:1px;background:#ececed"></div><div class="abs" style="left:0;top:364px;width:364.500px;height:4.300px;border-radius:2px;background:#d5d5d5"></div>
</div>
<div id="menu"><div style="top:6.0px">编辑环境</div><div style="top:33.8px">修改代理</div><div style="top:61.6px">克隆</div><div style="top:89.4px" >开启<span style="letter-spacing:-.7px">ADB</span></div><div style="top:117.2px" >开启<span style="letter-spacing:-.7px">ROOT</span></div><div style="top:145.0px">一键新机</div><div style="top:172.8px;color:#f04040">删除环境</div></div>
<svg class="abs" style="left:930px;top:214px" width="60" height="56" viewBox="930 214 60 56"><path d="M937 219L969.700 233.800 969.600 231.600 974 238.500 965.800 238.800 967.700 237.600z" fill="#ee3e3e"/><path d="M936.300 228.500L951.500 258.300 953.200 256.600 952 265 945.100 260 947.500 260.100z" fill="#ee3e3e"/></svg>
<div class="abs" style="left:685.500px;top:564px;font-size:11px;line-height:15px;color:#484848;white-space:nowrap;letter-spacing:-.3px">共4条记录</div>
<div class="pb" style="left:741.500px"><svg class="abs" style="left:9px;top:8px" width="7" height="10" viewBox="0 0 7 10" fill="none" stroke="#505050" stroke-width="1.100"><path d="M5 1.500L1.500 5 5 8.500"/></svg></div>
<div class="abs" style="left:775.500px;top:557px;width:26.500px;height:26.500px;border-radius:4px;background:#0f6ff6;color:#fff;font-size:11px;font-weight:bold;line-height:27px;text-align:center">1</div>
<div class="pb" style="left:809px"><svg class="abs" style="left:10px;top:8px" width="7" height="10" viewBox="0 0 7 10" fill="none" stroke="#505050" stroke-width="1.100"><path d="M2 1.500L5.500 5 2 8.500"/></svg></div>
<div class="abs" style="left:842.500px;top:564px;font-size:11px;line-height:15px;color:#484848;white-space:nowrap">每页行数</div>
<div class="pb" style="left:890px;width:72px"><span class="abs" style="left:5.500px;top:7px;font-size:11px;line-height:15px;color:#484848;white-space:nowrap;letter-spacing:-.2px">20 条/页</span><svg class="abs" style="left:51px;top:11px" width="8" height="5" viewBox="0 0 8 5" fill="none" stroke="#9a9ea6" stroke-width="1"><path d="M.5.500l3.500 3.500L7.500.500"/></svg></div>
<svg class="abs" style="left:976px;top:558px" width="26" height="22" viewBox="0 0 26 22" fill="none" stroke="#222" stroke-linecap="round"><path d="M.6 8.300L8.800 5.600Q8 8.300 8.800 11z" fill="#222" stroke="none"/><path d="M24 3.300A9.700 9.700 0 1 0 17.300 20.700" stroke-width="2"/><circle cx="16.700" cy="8.700" r="2.900" stroke-width="2.300"/></svg>
<div class="abs" style="left:0;top:599px;width:1024px;height:1px;background:#e6e8ec"></div><div class="abs" style="left:0;top:600px;width:1024px;height:1px;background:#c6c8cc"></div>
<div class="abs" style="left:1023px;top:0;width:1px;height:600px;background:linear-gradient(#c8cbd1,#d9dce1 30%,#dfe2e6)"></div>
</body>
</html>
